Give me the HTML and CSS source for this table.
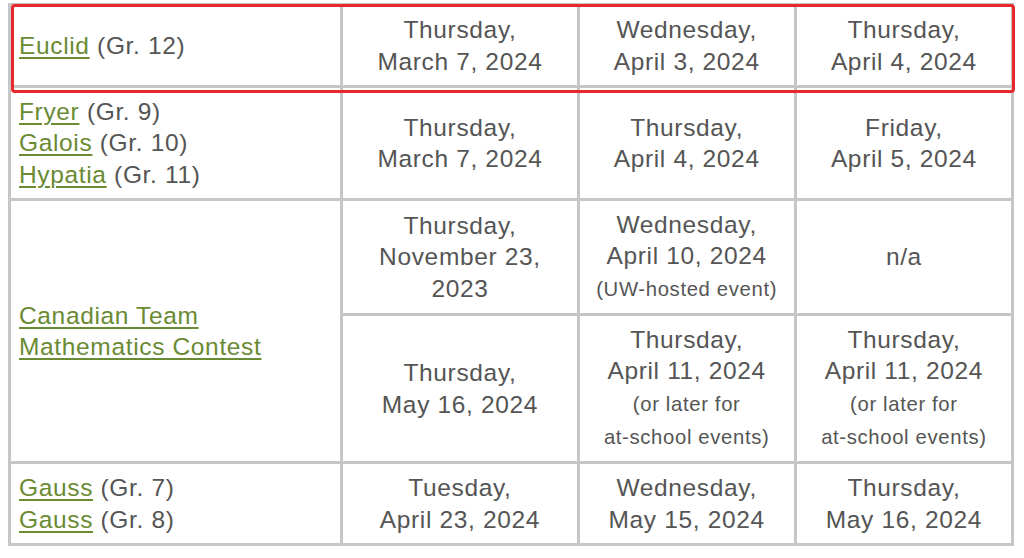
FILE: index.html
```html
<!DOCTYPE html>
<html>
<head>
<meta charset="utf-8">
<link rel="stylesheet" href="styles.css">
</head>
<body>
<div class="wrap">
<table class="dates">
  <colgroup>
    <col class="c1"><col class="c2"><col class="c3"><col class="c4">
  </colgroup>
  <tr class="r1">
    <td class="name"><a href="#">Euclid</a> (Gr. 12)</td>
    <td>Thursday,<br>March 7, 2024</td>
    <td>Wednesday,<br>April 3, 2024</td>
    <td>Thursday,<br>April 4, 2024</td>
  </tr>
  <tr class="r2">
    <td class="name"><a href="#">Fryer</a> (Gr. 9)<br><a href="#">Galois</a> (Gr. 10)<br><a href="#">Hypatia</a> (Gr. 11)</td>
    <td>Thursday,<br>March 7, 2024</td>
    <td>Thursday,<br>April 4, 2024</td>
    <td>Friday,<br>April 5, 2024</td>
  </tr>
  <tr class="r3">
    <td class="name" rowspan="2"><a href="#">Canadian Team<br>Mathematics Contest</a></td>
    <td>Thursday,<br>November 23,<br>2023</td>
    <td>Wednesday,<br>April 10, 2024<br><span class="small">(UW-hosted event)</span></td>
    <td>n/a</td>
  </tr>
  <tr class="r4">
    <td>Thursday,<br>May 16, 2024</td>
    <td>Thursday,<br>April 11, 2024<br><span class="small">(or later for<br>at-school events)</span></td>
    <td>Thursday,<br>April 11, 2024<br><span class="small">(or later for<br>at-school events)</span></td>
  </tr>
  <tr class="r5">
    <td class="name"><a href="#">Gauss</a> (Gr. 7)<br><a href="#">Gauss</a> (Gr. 8)</td>
    <td>Tuesday,<br>April 23, 2024</td>
    <td>Wednesday,<br>May 15, 2024</td>
    <td>Thursday,<br>May 16, 2024</td>
  </tr>
</table>
<div class="highlight"></div>
</div>
</body>
</html>
```

FILE: styles.css
```css
html, body {
  background: #ffffff;
}
body {
  margin: 3px 0 0 8px;
  font-family: "Liberation Sans", Arial, sans-serif;
}
.wrap {
  position: relative;
  width: 1006px;
}
.dates {
  border-collapse: collapse;
  table-layout: fixed;
  width: 1006px;
  color: #555555;
  font-size: 24.5px;
  letter-spacing: 0.65px;
  line-height: 31.5px;
}
.c1 { width: 332px; }
.c2 { width: 236px; }
.c3 { width: 217px; }
.c4 { width: 217px; }
.dates td {
  border: 3px solid #c6c6c6;
  padding: 6px 8px;
  text-align: center;
  vertical-align: middle;
}
.dates td.name {
  text-align: left;
}
.dates a {
  color: #6a8a33;
  text-decoration: underline;
  text-underline-offset: 3px;
  text-decoration-thickness: 1.5px;
}
.small {
  font-size: 20.3px;
}
.r1 { height: 82px; }
.r2 { height: 113px; }
.r3 { height: 115px; }
.r4 { height: 148px; }
.r5 { height: 82px; }
.highlight {
  position: absolute;
  left: 3px;
  top: 1px;
  width: 998px;
  height: 83px;
  border: 3px solid #e8282b;
  border-radius: 4px;
  pointer-events: none;
}
```
